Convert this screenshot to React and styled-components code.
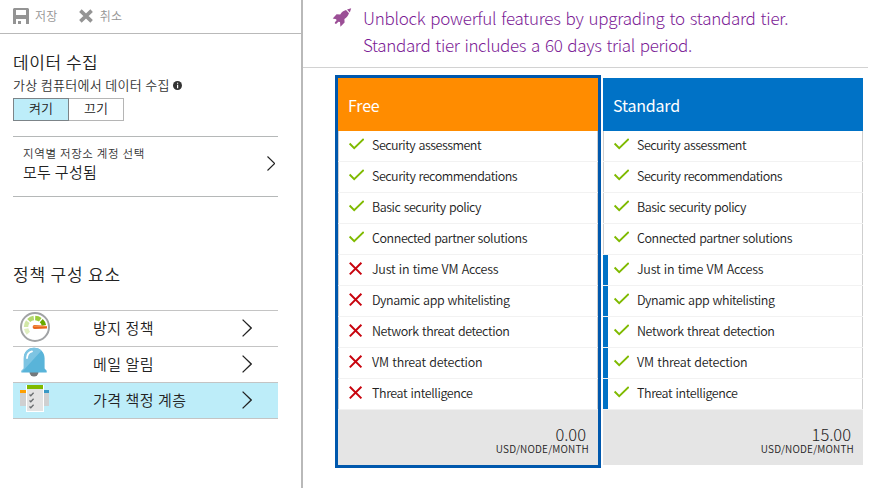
import React from 'react';
import styled, { createGlobalStyle } from 'styled-components';

const GlobalStyle = createGlobalStyle`
  * { box-sizing: border-box; }
  body {
    margin: 0;
    background: #fff;
    color: #222;
    font-family: "Noto Sans CJK KR", "Noto Sans", sans-serif;
    font-weight: 350;
    overflow: hidden;
  }
`;

const Page = styled.div`
  display: flex;
  width: 875px;
  height: 488px;
`;

const Sidebar = styled.aside`
  width: 303px;
  flex: none;
  border-right: 2px solid #b9b9b9;
`;

const Toolbar = styled.div`
  display: flex;
  height: 34px;
  padding: 0 0 2px 13px;
  gap: 21px;
  align-items: center;
  border-bottom: 1px solid #b9b9b9;
`;

const Command = styled.button`
  display: flex;
  align-items: center;
  gap: ${p => p.$gap}px;
  padding: 0;
  border: 0;
  background: none;
  color: #949494;
  font: inherit;
  font-size: 12px;
  line-height: 20px;
  letter-spacing: 0.3px;
  svg { display: block; }
`;

const Settings = styled.div`
  padding: 16px 0 0 13px;
  width: 278px;
`;

const Heading = styled.h2`
  margin: 0;
  font-size: 17px;
  font-weight: 350;
  line-height: 24px;
  letter-spacing: ${p => p.$track}px;
`;

const Label = styled.div`
  display: flex;
  align-items: center;
  gap: 3px;
  font-size: 13px;
  line-height: 20px;
  margin-top: 1px;
  letter-spacing: 0.3px;
  color: #333;
`;

const Toggle = styled.div`
  display: flex;
  margin-top: 3px;
`;

const ToggleOption = styled.button`
  width: ${p => (p.$on ? 56 : 55)}px;
  height: 23px;
  padding: 0 0 3px;
  border: 1px solid ${p => (p.$on ? '#7c8488' : '#b5b5b5')};
  ${p => !p.$on && 'border-left: 0;'}
  background: ${p => (p.$on ? '#bdedf9' : '#fff')};
  color: #222;
  font: inherit;
  font-size: 13px;
  line-height: 18px;
`;

const Selector = styled.div`
  display: flex;
  justify-content: space-between;
  align-items: center;
  height: 61px;
  margin: 15px 0 65px;
  padding: 0 3px 6px 10px;
  border-top: 1px solid #b5b8b8;
  border-bottom: 1px solid #b5b8b8;
`;

const SelectorCaption = styled.div`
  font-size: 11.5px;
  line-height: 17px;
  letter-spacing: 0.65px;
  color: #333;
`;

const SelectorValue = styled.div`
  font-size: 15px;
  line-height: 20px;
  letter-spacing: 0.3px;
`;

const PolicyList = styled.div`
  margin-top: 24px;
  border-top: 1px solid #c4c4c4;
`;

const PolicyItem = styled.div`
  display: grid;
  grid-template-columns: 80px 1fr 36px;
  align-items: center;
  height: 36px;
  padding-bottom: 2px;
  border-bottom: 1px solid #c4c4c4;
  background: ${p => (p.$selected ? '#bdedf9' : '#fff')};
  font-size: 15px;
  line-height: 22px;
  letter-spacing: 0.5px;
  svg { display: block; }
`;

const PolicyIcon = styled.span`
  align-self: start;
  padding-left: 6px;
`;

const Main = styled.main`
  flex: none;
  width: 565px;
`;

const Banner = styled.header`
  display: flex;
  height: 68px;
  padding: 4px 0 0 29px;
  gap: 10px;
  border-bottom: 1px solid #d2d2d2;
  color: #7c1c96;
  svg { margin-top: 1px; }
`;

const BannerLine = styled.div`
  font-size: 17px;
  font-weight: 300;
  line-height: 27px;
  letter-spacing: ${p => p.$track}px;
  word-spacing: 1.5px;
  white-space: nowrap;
`;

const Tiers = styled.div`
  display: flex;
  align-items: center;
  gap: 2px;
  padding: 7px 0 0 32px;
`;

const Card = styled.section`
  width: ${p => (p.$selected ? 266 : 260)}px;
  border: ${p => (p.$selected ? '3px solid #0058ad' : '0')};
`;

const CardTitle = styled.h3`
  margin: 0;
  height: 53px;
  padding: 0 10px;
  background: ${p => p.$color};
  color: #fff;
  font-size: 16px;
  font-weight: 400;
  line-height: 54px;
  letter-spacing: -0.18px;
`;

const Feature = styled.div`
  display: flex;
  height: 31px;
  border-bottom: 1px solid #f2f2f2;
`;

const FeatureBody = styled.div`
  display: flex;
  flex: 1;
  padding-left: ${p => (p.$extra ? 5 : 9)}px;
  border-right: 1px solid #cfcfcf;
  border-left: ${p => (p.$extra ? '5px solid #0072c6' : '1px solid #cfcfcf')};
  font-size: 12.5px;
  line-height: 28px;
  letter-spacing: ${p => p.$track}px;
  word-spacing: 1px;
  svg { display: block; flex: none; margin-right: 8px; }
`;

const Price = styled.footer`
  height: 55px;
  padding: 15px 10px 0 0;
  background: #e5e5e5;
  text-align: right;
`;

const Amount = styled.div`
  padding-right: 2px;
  font-size: 16.5px;
  font-weight: 300;
  line-height: 18px;
`;

const Unit = styled.div`
  margin-right: -1px;
  font-size: 10px;
  line-height: 12px;
  letter-spacing: 0.2px;
`;

const SaveIcon = () => (
  <svg width="16" height="16" viewBox="0 0 16 16">
    <path fill="#949494" fillRule="evenodd" d="M0 1l1-1h14l1 1v15h-3v-5H3v5H0zM3 2v5h10V2zM5 13h3v3H5z" />
  </svg>
);

const DiscardIcon = () => (
  <svg width="14" height="14" viewBox="0 0 14 14">
    <path stroke="#949494" strokeWidth="3.6" d="M1.4 1.6l11.2 10.8M12.6 1.6L1.4 12.4" />
  </svg>
);

const InfoIcon = () => (
  <svg width="9" height="9" viewBox="0 0 9 9">
    <circle cx="4.5" cy="4.5" r="4.5" fill="#333" />
    <path fill="#fff" d="M4 1.7h1.2v1.1H4zM4 3.7h1.2v3.5H4z" />
  </svg>
);

const Chevron = ({ size = 18 }) => (
  <svg width={size / 1.8} height={size} viewBox="0 0 10 18">
    <path fill="none" stroke="#222" strokeWidth="1.3" d="M.6.6L9.2 9 .6 17.4" />
  </svg>
);

const GaugeIcon = () => (
  <svg width="32" height="32" viewBox="0 0 32 32">
    <circle cx="16" cy="16" r="14" fill="#fff" stroke="#a1a3a5" strokeWidth="2" />
    <g fill="none" strokeWidth="4.4">
      <path stroke="#e0efc0" d="M9.4 22.2A9 9 0 0 1 7.2 17.6" />
      <path stroke="#d1e7a6" d="M7 16A9 9 0 0 1 8.8 10.6" />
      <path stroke="#b4d870" d="M9.7 9.5A9 9 0 0 1 14.8 7" />
      <path stroke="#9acb3b" d="M16.2 7A9 9 0 0 1 21.3 8.8" />
      <path stroke="#6aa900" d="M22.3 9.7A9 9 0 0 1 24.9 14.4" />
    </g>
    <path fill="#e8641b" d="M15.6 14L28 15v2.4l-12.4.6a2 2 0 0 1 0-4z" />
    <path fill="#f28a42" d="M15.6 14.6L28 15.2v.9H14z" />
  </svg>
);

const BellIcon = () => (
  <svg width="32" height="32" viewBox="0 1 32 32">
    <path fill="#74787b" d="M10.5 26h9a4.5 4.5 0 0 1-9 0z" />
    <path fill="#59b4d9" d="M2.5 26.500v-1.700l2.300-2.300V12.200C4.800 6 9 1.800 15 1.800S25.600 6 25.600 12.200v10.300l2.100 2.300v1.700z" />
    <path fill="#7dc4e2" d="M2.500 26.500v-1.700l2.300-2.300V12.200C4.800 6 9 1.800 15 1.800c3 0 5.500 1 7.500 2.800z" />
    <path fill="none" stroke="#fff" strokeWidth="1.800" strokeLinecap="round" d="M8 12c.2-3.400 2-5.800 5-6.600" />
  </svg>
);

const TierIcon = () => (
  <svg width="32" height="32" viewBox="0 0 32 32">
    <path fill="#cfd0d1" d="M1 10h6v13H1zM24 10h6v13h-6z" />
    <path fill="#ff9f00" d="M1 7h6v3H1z" />
    <path fill="#3999c6" d="M24 7h6v3h-6z" />
    <path fill="#fff" d="M7 2h18v27H7z" />
    <path fill="#e3e3e3" d="M8 6h16v22H8z" />
    <path fill="#7fba00" d="M8 2h16v4H8z" />
    <path fill="none" stroke="#6a6d70" strokeWidth="1.300" d="M10.500 11.500l1.300 1.300 2.800-3M10.500 17.500l1.300 1.300 2.800-3M10.500 23.500l1.300 1.300 2.800-3" />
  </svg>
);

const RocketIcon = () => (
  <svg width="21" height="22" viewBox="0 0 21 22">
    <g fill="#9b4f96">
      <path d="M14 5l3 3.200c-1.100 2.900-2.600 4.500-4.600 5.900l.2 3.400-4.200 4.200-.4-4.700-1.600-.2-2 2H2.900v-1.600l1.600-1.800-.3-1.200-3.500-.8 3.900-4.200 3.600.3C9.800 6.900 11.500 5.700 14 5z" />
      <path d="M15 4.500l4.200-1.300-1.400 4.200z" />
    </g>
  </svg>
);

const CheckIcon = () => (
  <svg width="16" height="30" viewBox="0 0 16 30">
    <path fill="none" stroke="#7fba00" strokeWidth="1.900" d="M1.600 12.500l4.600 4.700L15.700 8" />
  </svg>
);

const CrossIcon = () => (
  <svg width="16" height="30" viewBox="0 0 16 30">
    <path fill="none" stroke="#c8040e" strokeWidth="2" d="M1.800 7.800l11.600 11.600M13.400 7.800L1.800 19.400" />
  </svg>
);

const features = [
  { name: 'Security assessment', track: -0.5 },
  { name: 'Security recommendations', track: -0.49 },
  { name: 'Basic security policy', track: -0.46 },
  { name: 'Connected partner solutions', track: -0.42 },
  { name: 'Just in time VM Access', track: -0.26, extra: true },
  { name: 'Dynamic app whitelisting', track: -0.42, extra: true },
  { name: 'Network threat detection', track: -0.38, extra: true },
  { name: 'VM threat detection', track: -0.22, extra: true },
  { name: 'Threat intelligence', track: -0.4, extra: true },
];

const policies = [
  { name: '방지 정책', Icon: GaugeIcon },
  { name: '메일 알림', Icon: BellIcon },
  { name: '가격 책정 계층', Icon: TierIcon, selected: true },
];

const TierCard = ({ title, color, price, selected, full }) => (
  <Card $selected={selected}>
    <CardTitle $color={color}>{title}</CardTitle>
    {features.map(f => (
      <Feature key={f.name}>
        <FeatureBody $extra={full && f.extra} $track={f.track}>
          {full || !f.extra ? <CheckIcon /> : <CrossIcon />}
          {f.name}
        </FeatureBody>
      </Feature>
    ))}
    <Price>
      <Amount>{price}</Amount>
      <Unit>USD/NODE/MONTH</Unit>
    </Price>
  </Card>
);

export default function App() {
  return (
    <Page>
      <GlobalStyle />
      <Sidebar>
        <Toolbar>
          <Command $gap={6}><SaveIcon />저장</Command>
          <Command $gap={7}><DiscardIcon />취소</Command>
        </Toolbar>
        <Settings>
          <Heading $track={0.55}>데이터 수집</Heading>
          <Label>가상 컴퓨터에서 데이터 수집<InfoIcon /></Label>
          <Toggle>
            <ToggleOption $on>켜기</ToggleOption>
            <ToggleOption>끄기</ToggleOption>
          </Toggle>
          <Selector>
            <div>
              <SelectorCaption>지역별 저장소 계정 선택</SelectorCaption>
              <SelectorValue>모두 구성됨</SelectorValue>
            </div>
            <Chevron size={15} />
          </Selector>
          <Heading $track={0.8}>정책 구성 요소</Heading>
          <PolicyList>
            {policies.map(({ name, Icon, selected }) => (
              <PolicyItem key={name} $selected={selected}>
                <PolicyIcon><Icon /></PolicyIcon>
                {name}
                <Chevron />
              </PolicyItem>
            ))}
          </PolicyList>
        </Settings>
      </Sidebar>
      <Main>
        <Banner>
          <RocketIcon />
          <div>
            <BannerLine $track={-0.28}>Unblock powerful features by upgrading to standard tier.</BannerLine>
            <BannerLine $track={-0.35}>Standard tier includes a 60 days trial period.</BannerLine>
          </div>
        </Banner>
        <Tiers>
          <TierCard title="Free" color="#ff8c00" price="0.00" selected />
          <TierCard title="Standard" color="#0072c6" price="15.00" full />
        </Tiers>
      </Main>
    </Page>
  );
}
